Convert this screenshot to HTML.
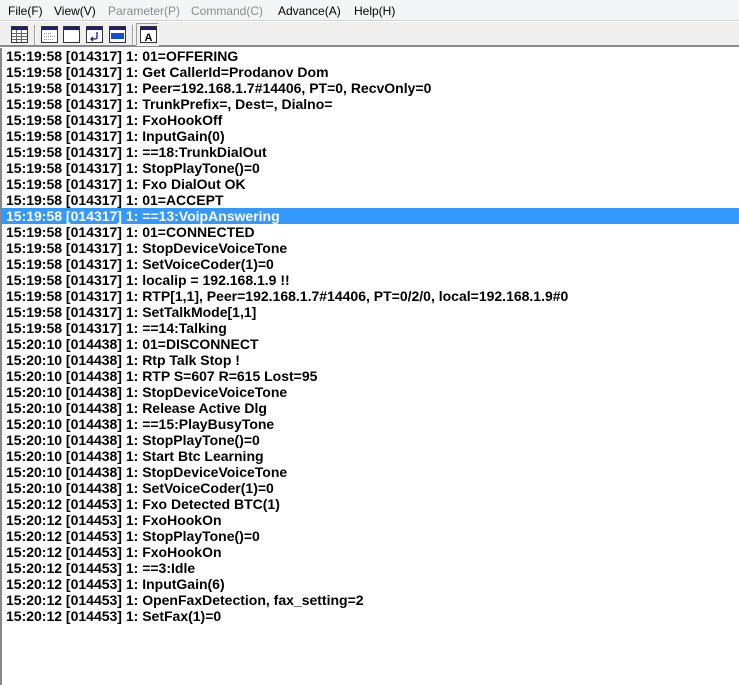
<!DOCTYPE html>
<html><head><meta charset="utf-8"><style>
*{margin:0;padding:0;box-sizing:border-box}
body{width:739px;height:685px;overflow:hidden;background:#fff;font-family:"Liberation Sans",sans-serif;position:relative}
#menu{position:absolute;left:0;top:0;width:739px;height:21px;background:#f4f5f7;border-bottom:1px solid #d0d0d0;font-size:12px}
#menu span{position:absolute;top:4px;color:#000}
#menu span.d{color:#8a8a8a}
#tb{position:absolute;left:0;top:21px;width:739px;height:26px;background:#efefef;border-top:1px solid #fff;border-bottom:2px solid #8a8a8a}
.ic{position:absolute;top:4px;width:17px;height:17px}
.sep{position:absolute;top:3px;width:2px;height:20px;border-left:1px solid #a0a0a0;border-right:1px solid #fff}
#log{position:absolute;left:0;top:48px;width:739px;height:637px;border-left:2px solid #888;background:#fff}
.l{height:16px;line-height:17px;font-size:14px;font-weight:bold;padding-left:4px;white-space:nowrap;color:#000;letter-spacing:0}
.s{background:#3399ff;color:#fff}
</style></head><body>
<div id="menu">
<span style="left:8px">File(F)</span>
<span style="left:54px">View(V)</span>
<span class="d" style="left:108px">Parameter(P)</span>
<span class="d" style="left:191px">Command(C)</span>
<span style="left:278px">Advance(A)</span>
<span style="left:354px">Help(H)</span>
</div>
<div id="tb">
<svg class="ic" style="left:11px" viewBox="0 0 17 17"><rect x="0.5" y="0.5" width="16" height="16" fill="#fff" stroke="#333"/><rect x="1" y="1" width="15" height="3" fill="#1a1a8a"/><path d="M1 7.5H16M1 10.5H16M1 13.5H16M5.5 4V16M10.5 4V16" stroke="#666"/></svg>
<div class="sep" style="left:34px"></div>
<svg class="ic" style="left:41px" viewBox="0 0 17 17"><rect x="0.5" y="0.5" width="16" height="16" fill="#fff" stroke="#333"/><rect x="1" y="1" width="15" height="3" fill="#1a1a8a"/><path d="M3 7.5H10M3 10.5H14M3 13.5H12" stroke="#999" stroke-dasharray="1 1"/></svg>
<svg class="ic" style="left:63px" viewBox="0 0 17 17"><rect x="0.5" y="0.5" width="16" height="16" fill="#fff" stroke="#333"/><rect x="1" y="1" width="15" height="3" fill="#1a1a8a"/></svg>
<svg class="ic" style="left:86px" viewBox="0 0 17 17"><rect x="0.5" y="0.5" width="16" height="16" fill="#fff" stroke="#333"/><rect x="1" y="1" width="15" height="3" fill="#1a1a8a"/><path d="M11 6V11Q11 13 9 13H6M7 11L5 13L7 15" stroke="#1a1a8a" fill="none" stroke-width="1.3"/></svg>
<svg class="ic" style="left:109px" viewBox="0 0 17 17"><rect x="0.5" y="0.5" width="16" height="16" fill="#fff" stroke="#333"/><rect x="1" y="1" width="15" height="3" fill="#1a1a8a"/><rect x="2" y="7" width="13" height="6" fill="#1050d0"/></svg>
<div class="sep" style="left:132px"></div>
<div style="position:absolute;left:136px;top:1px;width:23px;height:23px;border:1px solid;border-color:#a0a0a0 #fff #fff #a0a0a0"></div>
<svg class="ic" style="left:140px" viewBox="0 0 17 17"><rect x="0.5" y="0.5" width="16" height="16" fill="#fff" stroke="#333"/><rect x="1" y="1" width="15" height="3" fill="#1a1a8a"/><text x="8.5" y="15" font-size="11" font-weight="bold" text-anchor="middle" font-family="Liberation Sans,sans-serif">A</text></svg>
</div>
<div id="log">
<div class="l">15:19:58 [014317] 1: 01=OFFERING</div>
<div class="l">15:19:58 [014317] 1: Get CallerId=Prodanov Dom</div>
<div class="l">15:19:58 [014317] 1: Peer=192.168.1.7#14406, PT=0, RecvOnly=0</div>
<div class="l">15:19:58 [014317] 1: TrunkPrefix=, Dest=, Dialno=</div>
<div class="l">15:19:58 [014317] 1: FxoHookOff</div>
<div class="l">15:19:58 [014317] 1: InputGain(0)</div>
<div class="l">15:19:58 [014317] 1: ==18:TrunkDialOut</div>
<div class="l">15:19:58 [014317] 1: StopPlayTone()=0</div>
<div class="l">15:19:58 [014317] 1: Fxo DialOut OK</div>
<div class="l">15:19:58 [014317] 1: 01=ACCEPT</div>
<div class="l s">15:19:58 [014317] 1: ==13:VoipAnswering</div>
<div class="l">15:19:58 [014317] 1: 01=CONNECTED</div>
<div class="l">15:19:58 [014317] 1: StopDeviceVoiceTone</div>
<div class="l">15:19:58 [014317] 1: SetVoiceCoder(1)=0</div>
<div class="l">15:19:58 [014317] 1: localip = 192.168.1.9 !!</div>
<div class="l">15:19:58 [014317] 1: RTP[1,1], Peer=192.168.1.7#14406, PT=0/2/0, local=192.168.1.9#0</div>
<div class="l">15:19:58 [014317] 1: SetTalkMode[1,1]</div>
<div class="l">15:19:58 [014317] 1: ==14:Talking</div>
<div class="l">15:20:10 [014438] 1: 01=DISCONNECT</div>
<div class="l">15:20:10 [014438] 1: Rtp Talk Stop !</div>
<div class="l">15:20:10 [014438] 1: RTP S=607 R=615 Lost=95</div>
<div class="l">15:20:10 [014438] 1: StopDeviceVoiceTone</div>
<div class="l">15:20:10 [014438] 1: Release Active Dlg</div>
<div class="l">15:20:10 [014438] 1: ==15:PlayBusyTone</div>
<div class="l">15:20:10 [014438] 1: StopPlayTone()=0</div>
<div class="l">15:20:10 [014438] 1: Start Btc Learning</div>
<div class="l">15:20:10 [014438] 1: StopDeviceVoiceTone</div>
<div class="l">15:20:10 [014438] 1: SetVoiceCoder(1)=0</div>
<div class="l">15:20:12 [014453] 1: Fxo Detected BTC(1)</div>
<div class="l">15:20:12 [014453] 1: FxoHookOn</div>
<div class="l">15:20:12 [014453] 1: StopPlayTone()=0</div>
<div class="l">15:20:12 [014453] 1: FxoHookOn</div>
<div class="l">15:20:12 [014453] 1: ==3:Idle</div>
<div class="l">15:20:12 [014453] 1: InputGain(6)</div>
<div class="l">15:20:12 [014453] 1: OpenFaxDetection, fax_setting=2</div>
<div class="l">15:20:12 [014453] 1: SetFax(1)=0</div>
</div>
</body></html>
